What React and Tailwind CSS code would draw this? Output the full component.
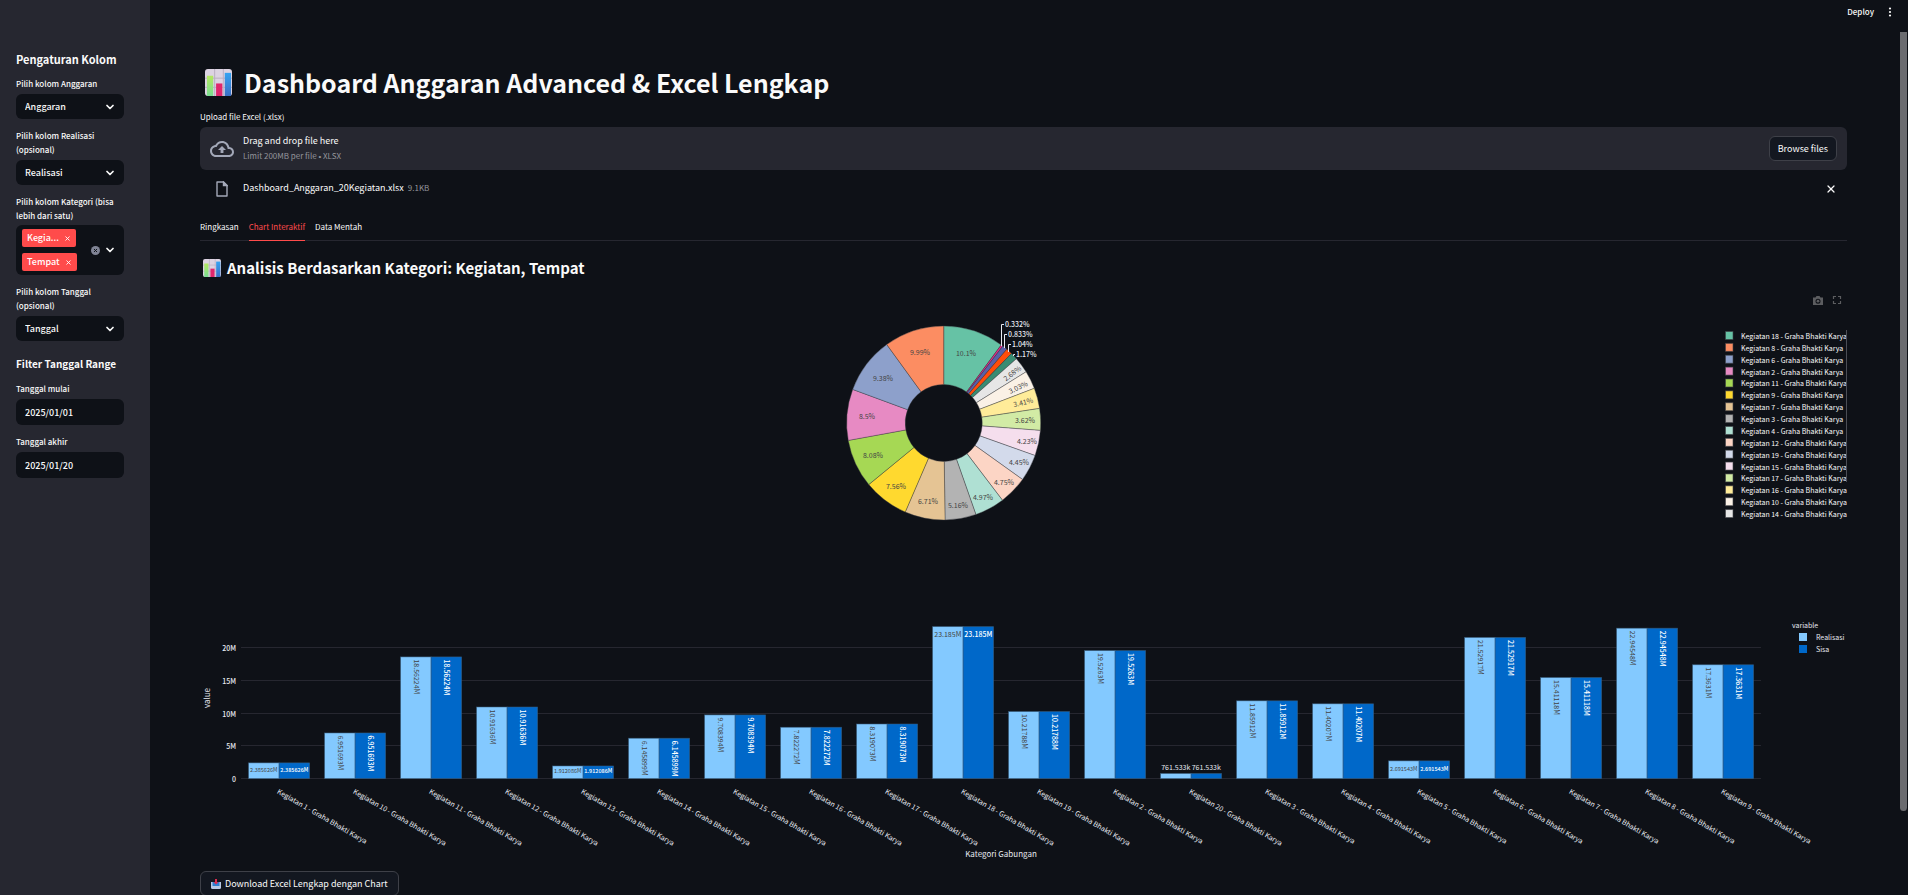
import React from "react";
import { ChevronDown, X } from "lucide-react";

const SLICES = [
  ["10.1%", 10.1, "#66c2a5", 966, 353],
  ["0.332%", 0.332, "#e7298a"],
  ["0.833%", 0.833, "#5a5fa8"],
  ["1.04%", 1.04, "#ff4d0a"],
  ["1.17%", 1.17, "#3a8c72"],
  ["2.68%", 2.68, "#e6e6e6", 1012, 373, -38],
  ["3.03%", 3.03, "#faf1e6", 1018, 387, -26],
  ["3.41%", 3.41, "#ffec99", 1023, 402, -14],
  ["3.62%", 3.62, "#d2eba5", 1025, 420],
  ["4.23%", 4.23, "#f5deed", 1027, 441],
  ["4.45%", 4.45, "#d3daeb", 1019, 462],
  ["4.75%", 4.75, "#fcd5c5", 1004, 482],
  ["4.97%", 4.97, "#afe0d3", 983, 497],
  ["5.16%", 5.16, "#b3b3b3", 958, 505],
  ["6.71%", 6.71, "#e5c494", 928, 501],
  ["7.56%", 7.56, "#ffd92f", 896, 486],
  ["8.08%", 8.08, "#a6d854", 873, 455],
  ["8.5%", 8.5, "#e78ac3", 867, 416],
  ["9.38%", 9.38, "#8da0cb", 883, 378],
  ["9.99%", 9.99, "#fc8d62", 920, 352],
];

const OUTSIDE = [
  ["0.332%", 1005, 324, "M1001.5 346V324.500H1004"],
  ["0.833%", 1008, 334, "M1004.5 348V334.500H1007"],
  ["1.04%", 1012, 344, "M1008.5 352V344.500H1011"],
  ["1.17%", 1016, 354, "M1013.5 356V354.500H1015"],
];

const PIE_LEGEND = [
  [18, "#66c2a5"], [8, "#fc8d62"], [6, "#8da0cb"], [2, "#e78ac3"],
  [11, "#a6d854"], [9, "#ffd92f"], [7, "#e5c494"], [3, "#b3b3b3"],
  [4, "#afe0d3"], [12, "#fcd5c5"], [19, "#d3daeb"], [15, "#f5deed"],
  [17, "#d2eba5"], [16, "#ffec99"], [10, "#faf1e6"], [14, "#e6e6e6"],
];

const BARS = [
  [1, 2.385626, "2.385626M", "small"], [10, 6.951693, "6.951693M"], [11, 18.56224, "18.56224M"],
  [12, 10.91636, "10.91636M"], [13, 1.912086, "1.912086M", "small"], [14, 6.145899, "6.145899M"],
  [15, 9.708394, "9.708394M"], [16, 7.822272, "7.822272M"], [17, 8.319073, "8.319073M"],
  [18, 23.185, "23.185M", "flat"], [19, 10.21788, "10.21788M"], [2, 19.5263, "19.5263M"],
  [20, 0.761533, "761.533k", "above"], [3, 11.85912, "11.85912M"], [4, 11.40207, "11.40207M"],
  [5, 2.691543, "2.691543M", "small"], [6, 21.52917, "21.52917M"], [7, 15.41118, "15.41118M"],
  [8, 22.94548, "22.94548M"], [9, 17.3631, "17.3631M"],
];

const CX = 943.7, CY = 423, R = 97, HOLE = 38.5;

function point(radius, fraction) {
  const a = fraction * 2 * Math.PI;
  return `${(CX + radius * Math.sin(a)).toFixed(2)} ${(CY - radius * Math.cos(a)).toFixed(2)}`;
}

function ChartEmoji({ className }) {
  return (
    <svg viewBox="0 0 28 28" className={className} aria-hidden="true">
      <defs>
        <linearGradient id="emoji-green" x1="0" y1="0" x2="0" y2="1">
          <stop offset="0" stopColor="#b4e861" /><stop offset="1" stopColor="#79dd92" />
        </linearGradient>
        <linearGradient id="emoji-blue" x1="0" y1="0" x2="0" y2="1">
          <stop offset="0" stopColor="#35a3f2" /><stop offset="1" stopColor="#3b6fc4" />
        </linearGradient>
      </defs>
      <rect width="28" height="28" rx="3" fill="#dcd3e2" />
      <path d="M10 0V28M19 0V28M0 9.500H28M0 19H28" stroke="#b9adc2" strokeWidth="1" />
      <rect x="2" y="7" width="6.500" height="21" fill="url(#emoji-green)" />
      <rect x="11.500" y="15" width="6.500" height="13" fill="#e0266c" />
      <rect x="20.500" y="4" width="6.500" height="24" fill="url(#emoji-blue)" />
    </svg>
  );
}

function SelectField({ id, label, value }) {
  return (
    <div>
      <label htmlFor={id} className="mb-[3px] block text-[8px] leading-[14px]">{label}</label>
      <div className="relative">
        <select id={id} defaultValue={value} className="block h-[25px] w-full appearance-none rounded-md bg-[#0e1117] pl-[9px] pr-6 text-[9px] leading-4 outline-none">
          <option>{value}</option>
        </select>
        <ChevronDown className="pointer-events-none absolute top-[7px] right-2 size-3" strokeWidth={3.5} />
      </div>
    </div>
  );
}

function DateField({ id, label, value }) {
  return (
    <div>
      <label htmlFor={id} className="mb-[3px] block text-[8px] leading-[14px]">{label}</label>
      <input id={id} type="text" defaultValue={value} className="block h-[26px] w-full rounded-md bg-[#0e1117] px-[9px] text-[9px] leading-4 outline-none" />
    </div>
  );
}

function Tag({ children }) {
  return (
    <span className="flex h-[18px] items-center gap-[5px] rounded-xs bg-[#ff4b4b] px-[5px] text-[9px] leading-[16px] text-white">
      <span>{children}</span>
      <button type="button" aria-label="Hapus" className="shrink-0"><X className="size-[7px]" strokeWidth={3} /></button>
    </span>
  );
}

function Sidebar() {
  return (
    <aside className="w-[150px] shrink-0 bg-[#262730] px-4 pt-[49px] pr-[26px] font-medium">
      <h2 className="text-[11px] font-bold leading-5 whitespace-nowrap">Pengaturan Kolom</h2>
      <div className="mt-2 flex flex-col gap-2.5">
        <SelectField id="anggaran" label="Pilih kolom Anggaran" value="Anggaran" />
        <SelectField id="realisasi" label="Pilih kolom Realisasi (opsional)" value="Realisasi" />
        <div>
          <p id="kategori" className="mb-0.5 text-[8px] leading-[14px]">Pilih kolom Kategori (bisa lebih dari satu)</p>
          <div role="group" aria-labelledby="kategori" className="flex h-[50px] items-center rounded-md bg-[#0e1117] pl-1.5 pr-2">
            <div className="flex flex-1 flex-col items-start gap-1.5">
              <Tag>Kegia...</Tag>
              <Tag>Tempat</Tag>
            </div>
            <button type="button" aria-label="Bersihkan">
              <svg viewBox="0 0 10 10" className="size-[9px]"><circle cx="5" cy="5" r="5" fill="#808495" /><path d="M3.300 3.300l3.400 3.400M6.700 3.300l-3.400 3.400" stroke="#0e1117" strokeWidth="1.100" /></svg>
            </button>
            <ChevronDown className="ml-1 size-3" strokeWidth={3.5} />
          </div>
        </div>
        <SelectField id="tanggal" label="Pilih kolom Tanggal (opsional)" value="Tanggal" />
      </div>
      <h3 className="mt-[13px] text-[10px] font-bold leading-5 whitespace-nowrap">Filter Tanggal Range</h3>
      <div className="mt-2 flex flex-col gap-2.5">
        <DateField id="mulai" label="Tanggal mulai" value="2025/01/01" />
        <DateField id="akhir" label="Tanggal akhir" value="2025/01/20" />
      </div>
    </aside>
  );
}

function PieChart() {
  let acc = 0;
  const total = SLICES.reduce((s, d) => s + d[1], 0);
  return (
    <svg viewBox="200 283 1647 310" className="block w-full overflow-visible" role="img" aria-label="Kategori" fontSize="7">
      <g fill="#5c5d60">
        <path fillRule="evenodd" d="M1813 297.500h2.500l1-1.500h3l1 1.500h2.500v7.500h-10zM1818 298.700a2.500 2.500 0 1 0 0 5a2.500 2.500 0 1 0 0-5z" />
        <circle cx="1818" cy="301.200" r="1.400" />
      </g>
      <path d="M1833.500 299v-2.500h2.500M1838 296.500h2.500v2.500M1840.500 301v2.500h-2.500M1836 303.500h-2.500v-2.500" fill="none" stroke="#5c5d60" strokeWidth="1.200" />
      {SLICES.map(([name, value, color]) => {
        const a = acc / total;
        acc += value;
        const b = acc / total;
        return (
          <path key={name} d={`M${point(R, a)}A${R} ${R} 0 0 1 ${point(R, b)}L${point(HOLE, b)}A${HOLE} ${HOLE} 0 0 0 ${point(HOLE, a)}Z`}
            fill={color} stroke="#3d3f45" strokeOpacity="0.55" strokeWidth="0.75" />
        );
      })}
      <g fill="#444" textAnchor="middle">
        {SLICES.filter((s) => s[3]).map(([name, , , x, y, rotate]) => (
          <text key={name} x={x} y={y + 3} transform={rotate ? `rotate(${rotate} ${x} ${y})` : undefined}>{name}</text>
        ))}
      </g>
      {OUTSIDE.map(([name, x, y, line]) => (
        <g key={name}>
          <path d={line} fill="none" stroke="#e6eaf1" />
          <text x={x} y={y + 3} fill="#e6eaf1" fontWeight="500">{name}</text>
        </g>
      ))}
      {PIE_LEGEND.map(([n, color], i) => {
        const y = 335.5 + i * 11.87;
        return (
          <g key={n}>
            <rect x="1725.500" y={y - 4} width="7.500" height="8" fill={color} stroke="#3d3f45" strokeOpacity="0.6" />
            <text x="1741" y={y + 3.5} fill="#fafafa">{`Kegiatan ${n} - Graha Bhakti Karya`}</text>
          </g>
        );
      })}
      <rect x="1846" y="330" width="1" height="152" fill="#4b4d55" />
    </svg>
  );
}

function BarChart() {
  return (
    <svg viewBox="200 593 1647 270" className="block w-full overflow-visible" role="img" aria-label="Realisasi dan Sisa" fontSize="7" fill="#e6eaf1">
      {[0, 5, 10, 15, 20].map((t) => {
        const y = Math.round(778 - t * 6.55) + 0.5;
        return (
          <g key={t}>
            <line x1="241" x2="1761" y1={y} y2={y} stroke="#262730" />
            <text x="236" y={y + 3} textAnchor="end" fontWeight="500">{t ? `${t}M` : "0"}</text>
          </g>
        );
      })}
      {BARS.map(([n, value, label, mode], i) => {
        const x = 248.6 + i * 76;
        const h = value * 6.55;
        const top = 778.5 - h;
        return (
          <g key={n}>
            {["#83c9ff", "#0068c9"].map((color, k) => {
              const bx = x + k * 30.5;
              const mid = bx + 15.2;
              const ink = k ? "#fff" : "#444";
              return (
                <g key={color} fontWeight={k ? 500 : 400}>
                  <rect x={bx} y={top} width="30.500" height={h} fill={color} stroke="#3b5f80" strokeOpacity="0.7" strokeWidth="0.75" />
                  {mode === "small" && <text x={mid} y={top + h / 2 + 1} fontSize="5.500" textAnchor="middle" fill={ink}>{label}</text>}
                  {mode === "flat" && <text x={mid} y={top + 10} textAnchor="middle" fill={ink}>{label}</text>}
                  {mode === "above" && <text x={mid} y={top - 4} textAnchor="middle" fontWeight="400">{label}</text>}
                  {!mode && <text transform={`translate(${mid - 2} ${top + 2.5}) rotate(90)`} fill={ink}>{label}</text>}
                </g>
              );
            })}
            <text transform={`translate(${x + 28} 793) rotate(30)`}>{`Kegiatan ${n} - Graha Bhakti Karya`}</text>
          </g>
        );
      })}
      <g fontSize="8">
        <text x="1001" y="857" textAnchor="middle">Kategori Gabungan</text>
        <text transform="translate(210 698) rotate(-90)" textAnchor="middle">value</text>
      </g>
      <text x="1792" y="628">variable</text>
      <rect x="1799" y="633" width="8" height="8" fill="#83c9ff" />
      <text x="1816" y="640">Realisasi</text>
      <rect x="1799" y="645" width="8" height="8" fill="#0068c9" />
      <text x="1816" y="652">Sisa</text>
    </svg>
  );
}

export default function App() {
  return (
    <div className="flex h-screen overflow-hidden bg-[#0e1117] font-['Source_Sans_Pro','Noto_Sans_CJK_SC',sans-serif] text-[#fafafa]">
      <Sidebar />
      <div className="relative flex min-w-0 flex-1 flex-col">
        <header className="flex h-6 shrink-0 items-center justify-end gap-3.5 pr-4">
          <button type="button" className="text-[8px] font-medium leading-4">Deploy</button>
          <button type="button" aria-label="Menu">
            <svg viewBox="0 0 4 10" className="h-2.5 w-1" fill="currentColor"><circle cx="2" cy="1.500" r="1.100" /><circle cx="2" cy="5" r="1.100" /><circle cx="2" cy="8.500" r="1.100" /></svg>
          </button>
        </header>
        <main className="pt-[38px] pr-[61px] pl-[50px]">
          <h1 className="flex items-center gap-3 pl-[5px] text-[25px] font-bold leading-10">
            <ChartEmoji className="size-[27px]" />
            Dashboard Anggaran Advanced &amp; Excel Lengkap
          </h1>
          <label htmlFor="file" className="mt-2 block text-[8px] leading-[14px]">Upload file Excel (.xlsx)</label>
          <div className="mt-[3px] flex h-[43px] items-center rounded-md bg-[#262730] px-2.5">
            <svg viewBox="0 0 24 24" className="size-6" fill="#a3a8b8">
              <path d="M19.350 10.040C18.670 6.590 15.640 4 12 4 9.110 4 6.600 5.640 5.350 8.040 2.340 8.360 0 10.910 0 14c0 3.310 2.690 6 6 6h13c2.760 0 5-2.240 5-5 0-2.640-2.050-4.780-4.650-4.960zM19 18H6c-2.210 0-4-1.790-4-4 0-2.050 1.530-3.760 3.560-3.970l1.070-.11.5-.95C8.080 7.140 9.940 6 12 6c2.620 0 4.880 1.860 5.390 4.430l.3 1.500 1.530.11c1.560.1 2.780 1.410 2.780 2.960 0 1.650-1.350 3-3 3zM8 13h2.550v3h2.900v-3H16l-4-4z" />
            </svg>
            <div className="ml-[9px] flex-1 pb-px">
              <p className="text-[9px] leading-4">Drag and drop file here</p>
              <p className="text-[8px] leading-[14px] text-[#94959b]">Limit 200MB per file <span className="font-['Liberation_Sans']">•</span> XLSX</p>
            </div>
            <input id="file" type="file" className="sr-only" />
            <button type="button" className="h-[25px] rounded-md border border-[#3e4048] bg-[#131720] px-2 text-[9px] leading-4">Browse files</button>
          </div>
          <div className="mt-[9px] flex h-5 items-center pr-2.5 pl-2.5">
            <svg viewBox="0 0 12 16" className="ml-1.5 h-4 w-3" fill="none" stroke="#a3a8b8" strokeWidth="1.400"><path d="M1 1h6.500L11 4.500V15H1z" strokeLinejoin="round" /><path d="M7.500 1v3.500H11z" fill="#a3a8b8" /></svg>
            <p className="ml-[15px] flex-1 pb-0.5 text-[9px] leading-4">Dashboard_Anggaran_20Kegiatan.xlsx <span className="ml-0.5 text-[8px] text-[#94959b]">9.1KB</span></p>
            <button type="button" aria-label="Hapus file"><X className="size-3" strokeWidth={2.5} /></button>
          </div>
          <div role="tablist" className="mt-5 flex h-[22px] gap-2.5 border-b border-[#262730] text-[8px] leading-4">
            <button type="button" role="tab" className="h-[22px] pb-1.5">Ringkasan</button>
            <button type="button" role="tab" aria-selected="true" className="h-[22px] border-b border-[#ff4b4b] pb-[5px] text-[#ff4b4b]">Chart Interaktif</button>
            <button type="button" role="tab" className="h-[22px] pb-1.5">Data Mentah</button>
          </div>
          <h2 className="mt-[15px] mb-[3px] flex items-center gap-1.5 pl-[3px] text-[15px] font-bold leading-6">
            <ChartEmoji className="size-[18px]" />
            Analisis Berdasarkan Kategori: Kegiatan, Tempat
          </h2>
          <PieChart />
          <BarChart />
          <button type="button" className="mt-2 flex h-[25px] items-center gap-1 rounded-md border border-[#3e4048] bg-[#131720] px-2.5 text-[9px] leading-4">
            <svg viewBox="0 0 10 10" className="size-2.5"><path d="M0 3h10v5.500a1.500 1.500 0 0 1-1.500 1.500h-7A1.500 1.500 0 0 1 0 8.500z" fill="#b9c9e4" /><path d="M1.500 3h7v4h-7z" fill="#2f7fd0" /><path d="M4 0h2v3h1.500L5 5.500 2.500 3H4z" fill="#d92c4f" /></svg>
            Download Excel Lengkap dengan Chart
          </button>
        </main>
        <div className="absolute top-8 right-px h-[779px] w-[7px] rounded-b-full bg-[#6b6c70]" />
      </div>
    </div>
  );
}
